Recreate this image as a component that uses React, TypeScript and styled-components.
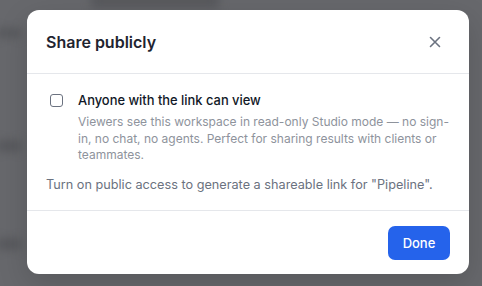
import React from 'react'
import styled, { createGlobalStyle } from 'styled-components'

const GlobalStyle = createGlobalStyle`
  html, body {
    margin: 0;
    padding: 0;
    width: 482px;
    height: 286px;
    overflow: hidden;
    font-family: Inter, "Noto Sans", sans-serif;
  }
`

const Backdrop = styled.div`
  position: relative;
  width: 482px;
  height: 286px;
  background: #67686c;
  overflow: hidden;
  display: flex;
  align-items: flex-start;
  padding: 10px 0 0 27px;
  box-sizing: border-box;
`

const Ghost = styled.div`
  position: absolute;
  background: #58595d;
  border-radius: 6px;
  filter: blur(4px);
`

const Modal = styled.div`
  position: relative;
  width: 442px;
  height: 264px;
  background: #fff;
  border-radius: 12px;
  display: flex;
  flex-direction: column;
  box-shadow: 0 10px 30px rgba(0, 0, 0, 0.15);
`

const Header = styled.div`
  height: 63px;
  display: flex;
  align-items: center;
  justify-content: space-between;
  padding: 0 24px 0 19px;
  border-bottom: 1px solid #e5e7eb;
`

const Title = styled.h2`
  margin: 0;
  font-size: 16px;
  font-weight: 600;
  color: #1f2430;
`

const CloseBtn = styled.button`
  border: none;
  background: none;
  padding: 4px;
  display: flex;
  color: #6b7280;
  cursor: pointer;
`

const Body = styled.div`
  flex: 1;
  padding: 18px 16px 0 19px;
  display: flex;
  flex-direction: column;
  gap: 12px;
`

const OptionRow = styled.label`
  display: flex;
  gap: 15px;
  padding-left: 4px;
`

const Box = styled.span`
  width: 13px;
  height: 13px;
  margin-top: 2px;
  border: 1px solid #6b7280;
  border-radius: 3px;
  box-sizing: border-box;
  flex-shrink: 0;
`

const OptionText = styled.div`
  display: flex;
  flex-direction: column;
  gap: 5px;
`

const Label = styled.span`
  font-size: 12.9px;
  font-weight: 500;
  color: #111827;
  line-height: 17px;
`

const Desc = styled.p`
  margin: 0;
  font-size: 12px;
  line-height: 16.5px;
  color: #8e939c;
`

const Note = styled.p`
  margin: 0;
  font-size: 12.7px;
  line-height: 17px;
  color: #6b7280;
`

const Footer = styled.div`
  height: 63px;
  border-top: 1px solid #e5e7eb;
  display: flex;
  align-items: center;
  justify-content: flex-end;
  padding: 0 19px;
`

const PrimaryButton = styled.button`
  width: 62px;
  height: 34px;
  border: none;
  border-radius: 7px;
  background: #2563eb;
  color: #fff;
  font-family: inherit;
  font-size: 13px;
  font-weight: 500;
`

export default function App() {
  return (
    <>
      <GlobalStyle />
      <Backdrop>
        <Ghost style={{ left: 90, top: -6, width: 130, height: 14 }} />
        <Ghost style={{ left: -4, top: 28, width: 26, height: 10 }} />
        <Ghost style={{ left: -4, top: 140, width: 26, height: 12 }} />
        <Ghost style={{ left: -4, top: 238, width: 26, height: 12 }} />
        <Modal>
          <Header>
            <Title>Share publicly</Title>
            <CloseBtn aria-label="Close">
              <svg width="12" height="12" viewBox="0 0 12 12" fill="none" stroke="currentColor" strokeWidth="1.6" strokeLinecap="round">
                <path d="M1.5 1.5l9 9M10.5 1.5l-9 9" />
              </svg>
            </CloseBtn>
          </Header>
          <Body>
            <OptionRow>
              <Box />
              <OptionText>
                <Label>Anyone with the link can view</Label>
                <Desc>
                  Viewers see this workspace in read-only Studio mode — no sign-in, no chat, no agents. Perfect for sharing results with clients or teammates.
                </Desc>
              </OptionText>
            </OptionRow>
            <Note>Turn on public access to generate a shareable link for "Pipeline".</Note>
          </Body>
          <Footer>
            <PrimaryButton>Done</PrimaryButton>
          </Footer>
        </Modal>
      </Backdrop>
    </>
  )
}
